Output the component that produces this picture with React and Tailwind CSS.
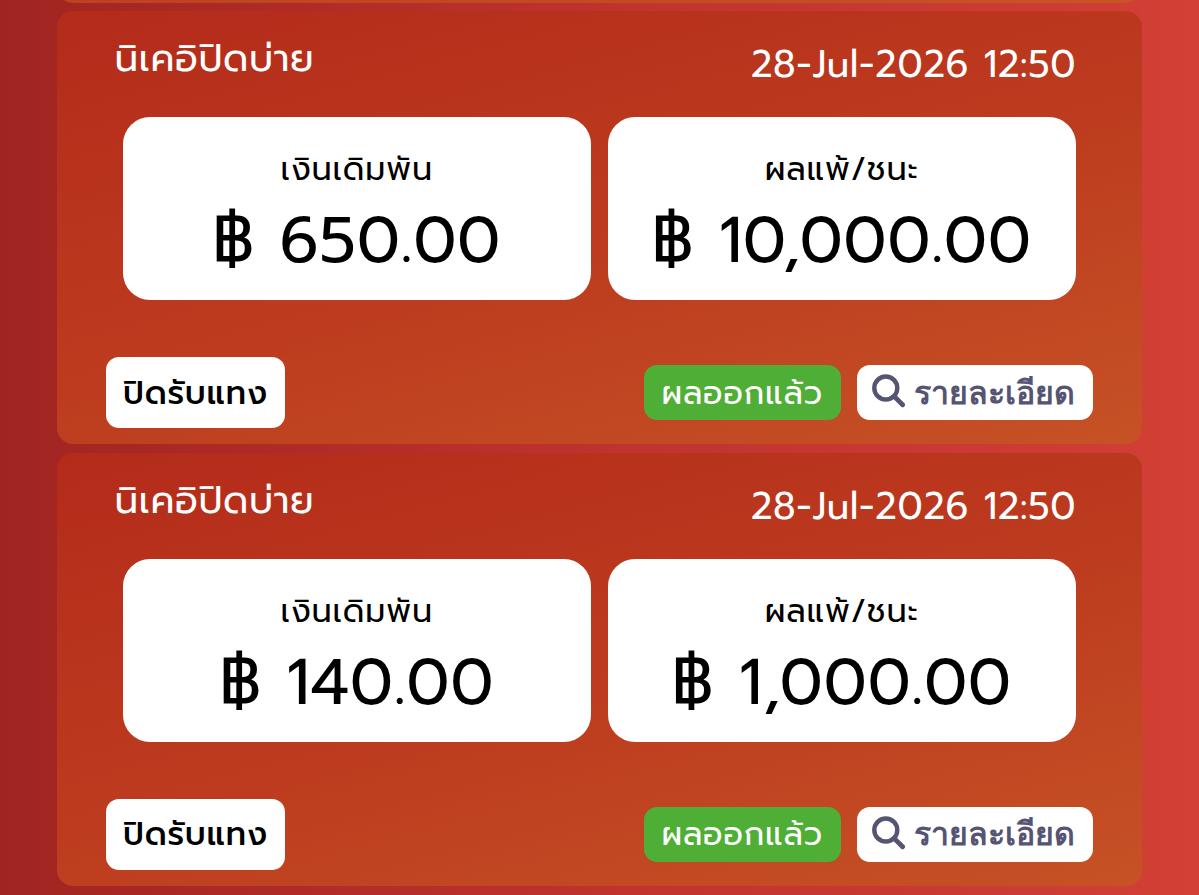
import React from "react";

const bets = [
  { stake: "650.00", result: "10,000.00" },
  { stake: "140.00", result: "1,000.00" },
];

function Amount({ label, value }) {
  return (
    <div className="flex h-[183px] w-[468.5px] flex-col items-center rounded-[27px] bg-white text-black">
      <div className="mt-[31px] h-[44px] whitespace-nowrap text-[32px] leading-[44px] tracking-[0.85px]">{label}</div>
      <div className="mt-[9px] whitespace-pre text-[64.5px] leading-[80px] tracking-[0.6px]">฿ {value}</div>
    </div>
  );
}

function SearchIcon() {
  return (
    <svg className="mb-[3px] h-[34px] w-[34px] shrink-0" viewBox="0 0 34 34" fill="none" stroke="#555473" strokeLinecap="round">
      <circle cx="13.8" cy="14" r="11.5" strokeWidth="4.4" />
      <path d="M22.2 22.4 30.6 30.8" strokeWidth="4.8" />
    </svg>
  );
}

function BetCard({ bet }) {
  return (
    <section className="h-[433px] w-[1085px] shrink-0 rounded-[16px] bg-[linear-gradient(165deg,#b42b1a_0%,#bd3c1f_54%,#c65225_100%)]">
      <div className="flex h-[106px] justify-between pl-[57.5px] pr-[66px] text-white">
        <div className="mt-[22px] h-[52px] whitespace-nowrap text-[37.5px] leading-[52px] tracking-[0.6px]">นิเคอิปิดบ่าย</div>
        <div className="mt-[28px] h-[52px] whitespace-nowrap text-[37.5px] leading-[52px] tracking-[0.6px]">28-Jul-2026 12:50</div>
      </div>
      <div className="flex gap-[16.5px] pl-[65.5px]">
        <Amount label="เงินเดิมพัน" value={bet.stake} />
        <Amount label="ผลแพ้/ชนะ" value={bet.result} />
      </div>
      <div className="mt-[57px] flex items-center pl-[49px] pr-[49.5px] tracking-[0.8px]">
        <div className="flex h-[71px] w-[179px] items-center justify-center rounded-[13px] bg-white pt-[2px] text-[32px] font-medium text-black">
          <span className="whitespace-nowrap">ปิดรับแทง</span>
        </div>
        <div className="ml-auto flex h-[55px] w-[196.5px] items-center justify-center rounded-[13px] bg-[#4eae36] pt-[2px] text-[32px] text-white">
          <span className="whitespace-nowrap">ผลออกแล้ว</span>
        </div>
        <div className="ml-[16px] flex h-[55px] w-[236px] items-center gap-[8px] rounded-[13px] bg-white pl-[15px] font-['Liberation_Sans',sans-serif] text-[32px] font-bold tracking-[0.1px] text-[#555473]">
          <SearchIcon />
          <span className="whitespace-nowrap">รายละเอียด</span>
        </div>
      </div>
    </section>
  );
}

export default function App() {
  return (
    <main className="h-[895px] w-[1199px] overflow-hidden bg-[linear-gradient(90deg,#a02522_0%,#a82724_12%,#c0332f_52%,#ce3c35_90%,#d34034_100%)] pl-[57px] font-['Prompt','Inter',sans-serif]">
      <div className="h-[3px] w-[1085px] overflow-hidden">
        <div className="mt-[-13px] h-[16px] rounded-b-[16px] bg-[linear-gradient(90deg,#be411f,#c75426)]" />
      </div>
      <div className="mt-[8px] flex flex-col gap-[8.5px]">
        {bets.map((bet) => (
          <BetCard key={bet.stake} bet={bet} />
        ))}
      </div>
    </main>
  );
}
